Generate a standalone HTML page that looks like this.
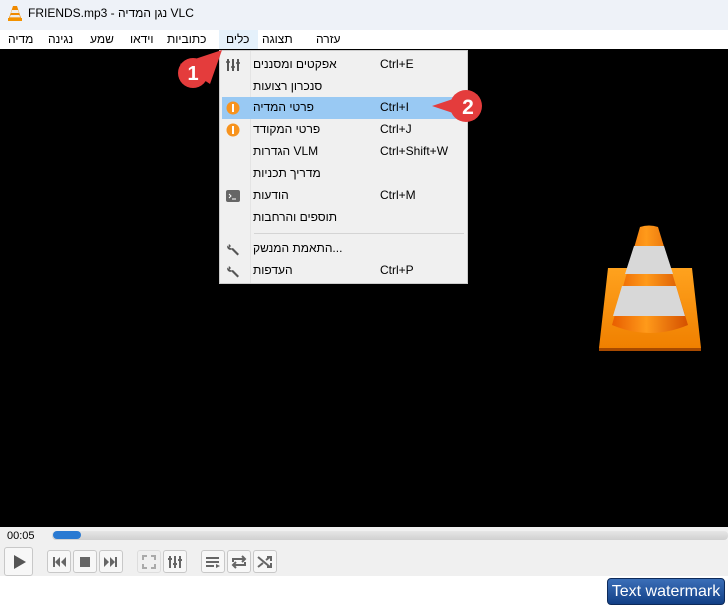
<!DOCTYPE html>
<html><head><meta charset="utf-8"><style>
*{margin:0;padding:0;box-sizing:border-box}
body{width:728px;height:607px;overflow:hidden;background:#fff;font-family:"Segoe UI","Liberation Sans","Noto Sans CJK SC",sans-serif;font-size:12px;color:#000;position:relative}
.abs{position:absolute}
#title{left:0;top:0;width:728px;height:30px;background:#eef2f8}
#menubar{left:0;top:30px;width:728px;height:19px;background:#fff}
.mi{position:absolute;top:32px;font-size:12px}
#video{left:0;top:49px;width:728px;height:478px;background:#000}
#ctrl{left:0;top:527px;width:728px;height:49px;background:#f0f0f0}
#menu{left:219px;top:50px;width:249px;height:234px;background:#f0f0f0;border:1px solid #ccc;box-shadow:1px 1px 2px rgba(0,0,0,.4)}
.row{position:absolute;left:2px;width:244px;height:22px}
.row .t{position:absolute;left:31px;top:3px;direction:ltr;white-space:nowrap}
.row .s{position:absolute;left:158px;top:3px;white-space:nowrap}
.row .i{position:absolute;left:4px;top:4px;width:14px;height:14px}
.btn{position:absolute;top:550px;width:24px;height:23px;border:1px solid #c8c8c8;border-radius:3px;background:#f7f7f7}
.btn svg{position:absolute;left:3px;top:3px}
</style></head><body>
<div id="title" class="abs"></div>
<svg class="abs" style="left:7px;top:5px" width="16" height="17" viewBox="0 0 16 17"><path d="M6 1h4l4 12H2z" fill="#f08a00"/><path d="M5 5h6l1 3H4zM3.6 10h8.8l.8 2.4H2.8z" fill="#eee"/><path d="M1 13h14v3H1z" fill="#f39200"/></svg>
<div class="abs" style="left:28px;top:6px;font-size:12px">FRIENDS.mp3 - <span dir="rtl">נגן המדיה</span> VLC</div>
<div id="menubar" class="abs"></div>
<div class="abs" style="left:219px;top:30px;width:39px;height:19px;background:#e5f1fb"></div>
<span class="mi" style="left:8px">מדיה</span>
<span class="mi" style="left:48px">נגינה</span>
<span class="mi" style="left:90px">שמע</span>
<span class="mi" style="left:130px">וידאו</span>
<span class="mi" style="left:167px">כתוביות</span>
<span class="mi" style="left:226px">כלים</span>
<span class="mi" style="left:262px">תצוגה</span>
<span class="mi" style="left:316px">עזרה</span>
<div id="video" class="abs"></div>
<svg class="abs" style="left:595px;top:224px" width="110" height="128" viewBox="0 0 110 128">
<defs><linearGradient id="g" x1="0" x2="1"><stop offset="0" stop-color="#e85d00"/><stop offset=".45" stop-color="#ff9a1a"/><stop offset="1" stop-color="#d45000"/></linearGradient>
<linearGradient id="b" x1="0" x2="0" y1="0" y2="1"><stop offset="0" stop-color="#ffa21e"/><stop offset="1" stop-color="#f08000"/></linearGradient></defs>
<path d="M13 44h84l9 80H4z" fill="url(#b)"/><path d="M4 124h102v3H4z" fill="#a84a00"/>
<path d="M45 3q9-3 18 0l30 98q-38 16-76 0z" fill="url(#g)"/>
<path d="M39 22h30l9 28H30z" fill="#d8d8d8"/><path d="M27 62h54l9 30H18z" fill="#d8d8d8"/>
</svg>
<div id="ctrl" class="abs"></div>
<div class="abs" style="left:7px;top:530px;font-size:11px">00:05</div>
<div class="abs" style="left:52px;top:531px;width:676px;height:9px;background:linear-gradient(#e6e6e6,#d0d0d0);border-radius:4px"></div>
<div class="abs" style="left:53px;top:531px;width:28px;height:8px;background:#2a7ad2;border-radius:4px"></div>
<div class="btn" style="left:4px;top:547px;width:29px;height:29px"><svg width="22" height="22"><path d="M6 4l12 7-12 7z" fill="#555"/></svg></div>
<div class="btn" style="left:47px"><svg width="16" height="16"><path d="M2 3h2v10H2zM9 3v10L4 8zM15 3v10L10 8z" fill="#666"/></svg></div>
<div class="btn" style="left:73px"><svg width="16" height="16"><path d="M3 3h10v10H3z" fill="#666"/></svg></div>
<div class="btn" style="left:99px"><svg width="16" height="16"><path d="M1 3v10l5-5zM7 3v10l5-5zM12 3h2v10h-2z" fill="#666"/></svg></div>
<div class="btn" style="left:137px;background:#f0f0f0;border-color:#ddd"><svg width="16" height="16" fill="none" stroke="#aaa" stroke-width="2"><path d="M2 6V2h4M10 2h4v4M14 10v4h-4M6 14H2v-4"/></svg></div>
<div class="btn" style="left:163px"><svg width="16" height="16" stroke="#666" stroke-width="2"><path d="M3 2v12M8 2v12M13 2v12"/><path d="M1 5h4M6 10h4M11 6h4" stroke-width="2"/></svg></div>
<div class="btn" style="left:201px"><svg width="16" height="16" stroke="#666" stroke-width="2"><path d="M1 4h13M1 8h13M1 12h8"/><path d="M11 10l4 2-4 2z" fill="#666" stroke="none"/></svg></div>
<div class="btn" style="left:227px"><svg width="16" height="16" fill="none" stroke="#666" stroke-width="2"><path d="M2 8V5h11M11 2l3 3-3 3M14 8v3H3M5 14l-3-3 3-3"/></svg></div>
<div class="btn" style="left:253px"><svg width="16" height="16" fill="none" stroke="#666" stroke-width="2"><path d="M1 3l12 10M1 13L6 9M9 6l4-3M10 3h4v4M10 13h4V9"/></svg></div>
<div class="abs" style="left:607px;top:578px;width:118px;height:27px;border-radius:4px;background:linear-gradient(#3b6fb8,#123f86);border:1px solid #0d2a5a;color:#fff;font-family:'Liberation Sans',sans-serif;font-size:16px;text-align:center;line-height:25px">Text watermark</div>

<div id="menu" class="abs">
<div class="abs" style="left:30px;top:0;width:1px;height:232px;background:#e4e4e4"></div>
<div class="row" style="top:3px"><svg class="i" viewBox="0 0 14 14" stroke="#555" stroke-width="2"><path d="M2 1v12M7 1v12M12 1v12"/><path d="M0 4h4M5 9h4M10 5h4" stroke-width="1.5"/></svg><span class="t">אפקטים ומסננים</span><span class="s">Ctrl+E</span></div>
<div class="row" style="top:25px"><span class="t">סנכרון רצועות</span></div>
<div class="row" style="top:46px;background:#99c9f3"><svg class="i" viewBox="0 0 14 14"><circle cx="7" cy="7" r="6.5" fill="#f7931e"/><rect x="6" y="3" width="2" height="8" fill="#fff"/></svg><span class="t">פרטי המדיה</span><span class="s">Ctrl+I</span></div>
<div class="row" style="top:68px"><svg class="i" viewBox="0 0 14 14"><circle cx="7" cy="7" r="6.5" fill="#f7931e"/><rect x="6" y="3" width="2" height="8" fill="#fff"/></svg><span class="t">פרטי המקודד</span><span class="s">Ctrl+J</span></div>
<div class="row" style="top:90px"><span class="t">הגדרות VLM</span><span class="s">Ctrl+Shift+W</span></div>
<div class="row" style="top:112px"><span class="t">מדריך תכניות</span></div>
<div class="row" style="top:134px"><svg class="i" viewBox="0 0 14 14"><rect x="0" y="1" width="14" height="12" rx="2" fill="#666"/><path d="M3 5l2 2-2 2M6 10h4" stroke="#fff" fill="none"/></svg><span class="t">הודעות</span><span class="s">Ctrl+M</span></div>
<div class="row" style="top:156px"><span class="t">תוספים והרחבות</span></div>
<div class="abs" style="left:34px;top:182px;width:210px;height:1px;background:#d4d4d4"></div>
<div class="row" style="top:187px"><svg class="i" viewBox="0 0 14 14"><path d="M3 2a3 3 0 0 0 4 4l6 6-1.5 1.5-6-6a3 3 0 0 1-4-4l2 2 1.5-1.5z" fill="#555"/></svg><span class="t">התאמת המנשק...</span></div>
<div class="row" style="top:209px"><svg class="i" viewBox="0 0 14 14"><path d="M3 2a3 3 0 0 0 4 4l6 6-1.5 1.5-6-6a3 3 0 0 1-4-4l2 2 1.5-1.5z" fill="#555"/></svg><span class="t">העדפות</span><span class="s">Ctrl+P</span></div>
</div>

<svg class="abs" style="left:170px;top:44px" width="60" height="55"><path d="M10 20L52 6 40 40z" fill="#e43c3c"/><circle cx="23" cy="29" r="15" fill="#e43c3c"/><text x="23" y="36" text-anchor="middle" fill="#fff" font-family="Liberation Sans" font-weight="bold" font-size="20">1</text></svg>
<svg class="abs" style="left:428px;top:88px" width="60" height="38"><path d="M4 18L40 6V30z" fill="#e43c3c"/><circle cx="38" cy="18" r="16" fill="#e43c3c"/><text x="40" y="26" text-anchor="middle" fill="#fff" font-family="Liberation Sans" font-weight="bold" font-size="21">2</text></svg>
</body></html>
